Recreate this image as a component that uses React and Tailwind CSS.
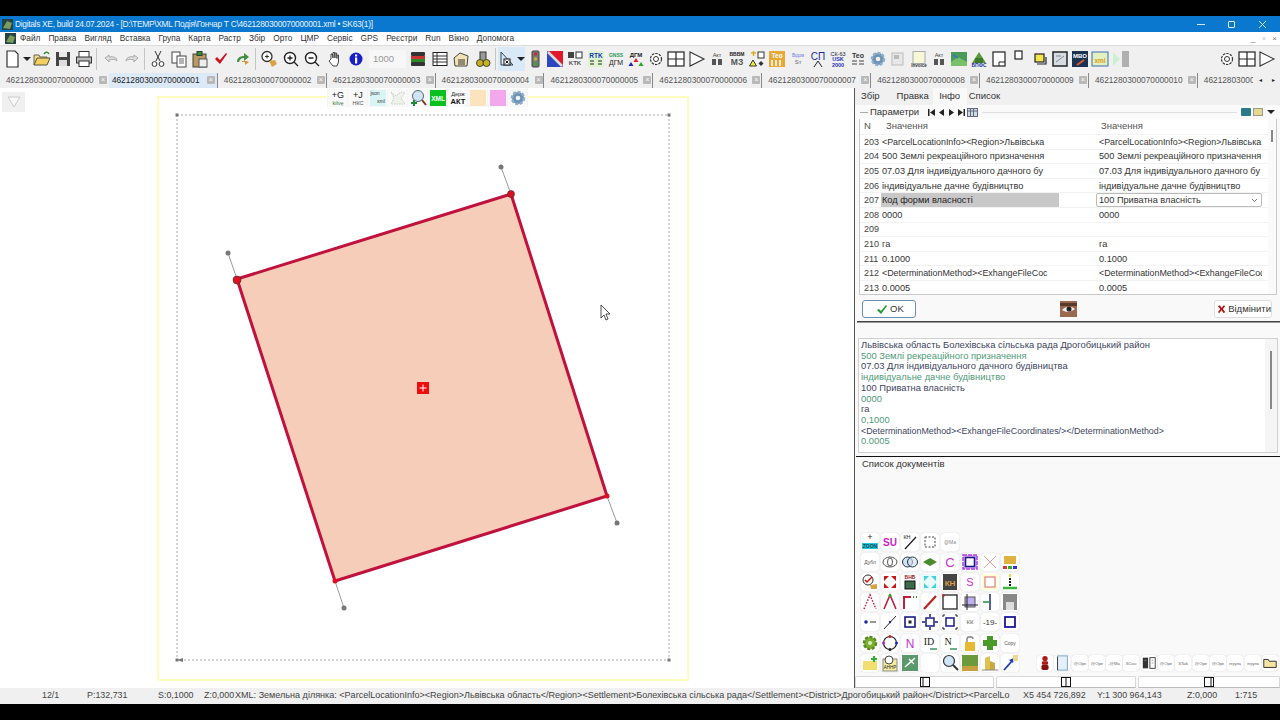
import React from "react";

/* =========================
   SMALL DRAWING HELPERS
========================= */
const Svg = ({ children, s = 18 }) => (
  <svg width={s} height={s} viewBox="0 0 18 18" className="block">
    {children}
  </svg>
);

const Tx = ({ x = 9, y = 12, z = 6, c = "#444", w = 400, children }) => (
  <text x={x} y={y} fontSize={z} fill={c} fontWeight={w} textAnchor="middle" fontFamily="Liberation Sans, sans-serif">
    {children}
  </text>
);

const icons = {
  doc: <path d="M3 1h8l3 3v13H3z" fill="#fff" stroke="#333" strokeWidth="1.2" />,
  open: <><path d="M1 15V5h5l1 2h7v2" fill="#f5dc86" stroke="#665" /><path d="M1 15l3-7h13l-3 7z" fill="#f3cf62" stroke="#554" /><path d="M11 4c2-3 4-2 5 0" fill="none" stroke="#2a8a2a" strokeWidth="1.4" /></>,
  save: <><rect x="2" y="2" width="14" height="14" fill="#444" /><rect x="5" y="2" width="8" height="5" fill="#e8e8e8" /><rect x="5" y="10" width="8" height="6" fill="#ddd" /></>,
  print: <><rect x="4" y="1.5" width="10" height="6" fill="#fff" stroke="#333" /><rect x="1.5" y="7" width="15" height="6" fill="#bbb" stroke="#333" /><rect x="4" y="11" width="10" height="5.5" fill="#fff" stroke="#333" /></>,
  undo: <path d="M3 8l4-3v2c5-1 8 1 8 4-2-2-4-2-8-1v2z" fill="#ddd" stroke="#aaa" />,
  redo: <path d="M15 8l-4-3v2C6 6 3 8 3 11c2-2 4-2 8-1v2z" fill="#ddd" stroke="#aaa" />,
  cut: <><path d="M6 1l5 10M12 1L7 11" stroke="#333" fill="none" /><circle cx="5.5" cy="14" r="2.4" fill="#fff" stroke="#333" /><circle cx="12.5" cy="14" r="2.4" fill="#fff" stroke="#333" /></>,
  copy: <><rect x="2" y="2" width="8" height="11" fill="#fff" stroke="#444" /><rect x="7" y="6" width="9" height="11" fill="#fff" stroke="#444" /><path d="M9 9h5M9 11h5M9 13h5" stroke="#666" /></>,
  paste: <><rect x="2" y="4" width="13" height="13" fill="#b89a62" stroke="#443" /><rect x="6" y="1.5" width="5" height="4" fill="#3a8a3a" stroke="#243" /><rect x="8" y="9" width="8" height="8" fill="#eee" stroke="#555" /></>,
  check: <path d="M3 9l2-2 3 3 6-7 1 1-7 10z" fill="#d0101a" />,
  greenArrow: <><path d="M3 12c0-4 3-6 7-6V3l5 4-5 4V8c-3 0-4 1-5 4z" fill="#3f8f3f" /><path d="M15 12l-4 3v-3H8v-1h4z" fill="#d9912a" /></>,
  zoomHand: <><circle cx="7" cy="6.5" r="5" fill="#fff" stroke="#333" strokeWidth="1.3" /><path d="M5 6.5h4M7 4.5v4" stroke="#333" /><path d="M9 11l6-1 2 4-5 3z" fill="#d9a24a" /></>,
  zoomIn: <><circle cx="8" cy="8" r="5.5" fill="#fff" stroke="#222" strokeWidth="1.4" /><path d="M5.5 8h5M8 5.5v5M12 12l4 4" stroke="#222" strokeWidth="1.3" /></>,
  zoomOut: <><circle cx="8" cy="8" r="5.5" fill="#fff" stroke="#222" strokeWidth="1.4" /><path d="M5.5 8h5M12 12l4 4" stroke="#222" strokeWidth="1.3" /></>,
  hand: <path d="M5 9V4l1.500 0 .5 4V2.500h1.500L9 8V3h1.500l.5 5.500V5h1.500v7l-1.500 4H7L3 11l1-1z" fill="#fff" stroke="#333" strokeWidth=".9" />,
  info: <><circle cx="9" cy="9" r="6.500" fill="#1520c8" /><rect x="8" y="4.500" width="2.200" height="2" fill="#fff" /><rect x="8" y="7.500" width="2.200" height="6" fill="#fff" /></>,
  stack: <><rect x="2" y="2" width="14" height="4" rx="1" fill="#333" /><rect x="2" y="6" width="14" height="3" fill="#c33" /><rect x="2" y="9" width="14" height="3" fill="#2a8a2a" /><rect x="2" y="12" width="14" height="4" rx="1" fill="#333" /></>,
  table: <><rect x="2" y="2.500" width="14" height="13" fill="#fff" stroke="#222" /><path d="M2 6h14M2 9h14M2 12h14M6 3v12" stroke="#333" /></>,
  folderDoc: <><path d="M2 8l6-5 8 3-1 10H3z" fill="#f1e3b4" stroke="#444" /><path d="M6 10h7M6 12h7M6 14h7" stroke="#333" /></>,
  gears: <><rect x="6" y="2" width="6" height="9" fill="#999" stroke="#333" /><circle cx="6" cy="13" r="3.500" fill="#c8b020" stroke="#443" /><circle cx="12.500" cy="13" r="3.500" fill="#c8b020" stroke="#443" /></>,
  select: <><path d="M3 2v13h12L3 2z" fill="#d8e6f5" stroke="#345" /><rect x="6" y="9" width="6" height="6" fill="#fff" stroke="#111" /><path d="M7.500 10.500l3 3M10.500 10.500l-3 3" stroke="#111" /></>,
  traffic: <><rect x="6" y="1" width="7" height="16" rx="1" fill="#777" stroke="#444" /><circle cx="9.500" cy="4" r="1.800" fill="#b33" /><circle cx="9.500" cy="9" r="1.800" fill="#ca3" /><circle cx="9.500" cy="14" r="1.800" fill="#3a3" /></>,
  blueRed: <><path d="M1 1h16v16z" fill="#e0182c" /><path d="M1 1v16h16z" fill="#2c46c0" /><path d="M2 2l14 14" stroke="#ddd" strokeWidth="2.500" /></>,
  ktk: <><rect x="2" y="2" width="6" height="6" fill="#444" /><rect x="10" y="2" width="6" height="6" fill="#fff" stroke="#333" /><Tx y="15" z="6" c="#555" w={700}>KTK</Tx></>,
  rtk: <><rect x="1" y="1" width="16" height="16" fill="#dff5d0" /><Tx y="8" z="6.500" c="#1038b8" w={700}>RTK</Tx><path d="M3 11h4M11 11h4M3 14h4M11 14h4" stroke="#222" /></>,
  gnss: <><Tx y="7" z="5" c="#2a9a50" w={700}>GNSS</Tx><Tx y="15" z="7" c="#222">ДГМ</Tx></>,
  dgm: <><Tx y="7" z="6" c="#222" w={700}>ДГМ</Tx><path d="M9 8l2.500 4h-5z" fill="#d22" /><path d="M4 12l2.500 4h-5z" fill="#22a" /><path d="M14 12l2.500 4h-5z" fill="#2a2" /></>,
  gear: <><circle cx="9" cy="9" r="5.500" fill="#fff" stroke="#333" strokeWidth="1.200" strokeDasharray="2.500 1" /><circle cx="9" cy="9" r="2.500" fill="#fff" stroke="#333" /></>,
  split: <><rect x="1" y="2" width="16" height="14" fill="#fff" stroke="#222" strokeWidth="1.200" /><path d="M9 2v14M1 9h16" stroke="#222" strokeWidth="1.200" /></>,
  play: <path d="M2 2l14 7-14 7z" fill="#fff" stroke="#333" strokeWidth="1.100" />,
  act: <><Tx y="6.500" z="5.500" c="#444">Акт</Tx><rect x="4" y="9" width="4" height="6" fill="#555" /><rect x="10" y="9" width="4" height="6" fill="#555" /></>,
  mz: <><Tx y="6" z="5" c="#222" w={700}>ВВВМ</Tx><Tx y="15" z="8.500" c="#555" w={700}>МЗ</Tx></>,
  tri: <><path d="M3 3h5M5.500 1v5" stroke="#d8b020" strokeWidth="1.500" /><rect x="10" y="2" width="6" height="6" fill="#fff" stroke="#333" /><path d="M5 10l3.500 6h-7z" fill="#ee3" stroke="#333" /><path d="M13 11l2.500 2.500-2.500 2.500-2.500-2.500z" fill="#333" /></>,
  teoOrange: <><rect x="1" y="1" width="16" height="16" fill="#e8a838" /><Tx y="8" z="6.500" c="#fff" w={700}>Тео</Tx><path d="M4 10v6M8 10v6M12 10v6" stroke="#fff" strokeWidth="1.500" /></>,
  vidom: <><Tx y="7" z="4.500" c="#6a7ae0">Відом</Tx><Tx y="14" z="6" c="#667">Sт</Tx></>,
  sp: <><Tx y="10" z="10" c="#1a2a9a">СП</Tx><path d="M5 17l4-6 4 6" fill="none" stroke="#223" /></>,
  sk63: <><Tx y="6" z="5.500" c="#223">СК-63</Tx><Tx y="11" z="5.500" c="#2a34b8" w={700}>USK</Tx><Tx y="17" z="5.500" c="#2a34b8" w={700}>2000</Tx></>,
  teo: <><Tx y="8" z="7" c="#333" w={700}>Тео</Tx><path d="M3 11h5M10 11h5M3 14h5M10 14h5" stroke="#444" /></>,
  blueGear: <><circle cx="9" cy="9" r="6" fill="#6d93b5" stroke="#8eb0cc" strokeWidth="2.500" strokeDasharray="3 1.500" /><circle cx="9" cy="9" r="2.300" fill="#f0f0f0" /></>,
  pale: <><rect x="3" y="3" width="11" height="12" fill="#e8e8e8" stroke="#bbb" /><rect x="5" y="5" width="5" height="4" fill="#bbb" /></>,
  invoice: <><rect x="3" y="1.500" width="12" height="12" fill="#f8f8d8" stroke="#aaa" /><Tx y="17" z="4.500" c="#333" w={700}>Invoice</Tx></>,
  map: <><rect x="1" y="2" width="16" height="14" fill="#4a9a5a" /><path d="M1 12l7-5 9 5v4H1z" fill="#7abf6a" /><path d="M3 5l5 3" stroke="#3878b8" strokeWidth="1.500" /></>,
  map2: <><path d="M2 13L9 2l7 11z" fill="#5a9a3a" /><path d="M5 8h8v5H5z" fill="#3a7a2a" /><Tx y="17" z="5" c="#2230a0" w={700}>БПФС</Tx></>,
  sheetBR: <><rect x="3" y="2" width="12" height="14" fill="#fff" stroke="#222" strokeWidth="1.200" /><path d="M9 16v-4h6" fill="none" stroke="#222" /></>,
  sheetTL: <rect x="4" y="1" width="7" height="8" fill="#fff" stroke="#222" strokeWidth="1.200" />,
  yellow: <><rect x="4" y="4" width="9" height="8" fill="#f2e64a" stroke="#222" strokeWidth="1.200" /><path d="M6 14h9V7" fill="none" stroke="#222" strokeWidth="1.200" /></>,
  photo: <><rect x="2" y="2" width="14" height="14" fill="#d5dde3" stroke="#222" strokeWidth="1.500" /><path d="M5 12l8-6M5 6h5" stroke="#889" /></>,
  mbo: <><rect x="1" y="1" width="16" height="16" fill="#1b3350" /><Tx y="8" z="6" c="#fff" w={700}>MBO</Tx><path d="M6 15l7-5" stroke="#e05a2a" strokeWidth="2" /></>,
  xmlMap: <><rect x="1" y="2" width="16" height="14" fill="#e3f0c0" stroke="#3a6ab0" /><Tx y="13" z="6.500" c="#d8a020" w={700}>xml</Tx></>,
  greenBar: <><path d="M1 2l7 7-7 7z" fill="#cdeed0" /><rect x="10" y="1" width="7" height="16" fill="#b0b0b0" /></>,
  gAdd: <><Tx y="9" z="9" c="#222">+G</Tx><Tx y="16" z="5.500" c="#2a7a3a">kilvę</Tx></>,
  jAdd: <><Tx y="9" z="9" c="#222">+J</Tx><Tx y="16" z="5.500" c="#555">НКС</Tx></>,
  json: <><rect x="1" y="1" width="16" height="16" fill="#d8f4f4" /><Tx x="6" y="6" z="5" c="#333">json</Tx><Tx x="12" y="14" z="5" c="#333">xml</Tx></>,
  paleMap: <><path d="M2 3l5 4 5-4 4 1-4 5 4 6H2l3-6z" fill="#eef2ea" stroke="#c2d0c0" strokeDasharray="1.500 1" /></>,
  zoomGreen: <><circle cx="9" cy="7" r="5.500" fill="#cfe4f4" stroke="#567" /><path d="M2 14h6M5 11v6" stroke="#1a8a3a" strokeWidth="2" /><path d="M13 11l4 5" stroke="#7a3a1a" strokeWidth="2" /></>,
  xmlGreen: <><rect x="1" y="1" width="16" height="16" fill="#08c020" /><Tx y="12" z="6.500" c="#fff" w={700}>XML</Tx></>,
  derzh: <><Tx y="7" z="5.500" c="#222">Держ</Tx><Tx y="15" z="7.500" c="#111" w={700}>АКТ</Tx></>,
  peach: <rect x="1" y="1" width="16" height="16" fill="#fde2be" />,
  pink: <rect x="1" y="1" width="16" height="16" fill="#f3a8ee" />,
  zoon: <><Tx y="7" z="9" c="#222">+</Tx><rect x="1" y="10" width="16" height="6" fill="#22c8d8" /><Tx y="15" z="5" c="#145" w={700}>ZOON</Tx></>,
  su: <Tx y="13" z="10" c="#d020c8" w={700}>SU</Tx>,
  kn: <><Tx x="6" y="6" z="5.500" c="#222">КН</Tx><path d="M4 16l11-12" stroke="#222" strokeWidth="1.300" /></>,
  dashSq: <rect x="4" y="4" width="10" height="10" fill="none" stroke="#444" strokeDasharray="2 1.500" />,
  atMa: <Tx y="11" z="5" c="#888">@Ma</Tx>,
  dub: <Tx y="11" z="5" c="#555">Дубл</Tx>,
  ring1: <><ellipse cx="9" cy="9" rx="7" ry="5" fill="#fff" stroke="#555" /><ellipse cx="9" cy="9" rx="2.500" ry="4" fill="#fff" stroke="#555" /></>,
  ring2: <><ellipse cx="6.500" cy="9" rx="5" ry="5" fill="#cfe0f0" stroke="#234" /><ellipse cx="11.500" cy="9" rx="5" ry="5" fill="#cfe0f0" stroke="#234" fillOpacity=".6" /></>,
  greenLeaf: <path d="M2 9l7-4 7 4-7 4z" fill="#4a8a2a" />,
  cPink: <Tx y="14" z="13" c="#c830d0">C</Tx>,
  sqPurple: <><rect x="2" y="2" width="14" height="14" fill="#e0b0f8" stroke="#b040e8" strokeDasharray="4 1" strokeWidth="1.500" /><rect x="4.500" y="4.500" width="9" height="9" fill="#fff" stroke="#1a1a8a" strokeWidth="1.600" /></>,
  crossPink: <path d="M3 3l12 12M15 3L3 15" stroke="#e8a0a0" />,
  folderColor: <><rect x="3" y="3" width="12" height="8" fill="#e0b040" /><rect x="2" y="13" width="4" height="3" fill="#d33" /><rect x="7" y="13" width="4" height="3" fill="#3a3" /><rect x="12" y="13" width="4" height="3" fill="#33c" /></>,
  checkStamp: <><circle cx="7" cy="7" r="5" fill="#fff" stroke="#333" /><path d="M4 7l2 2 5-5" stroke="#d01010" fill="none" strokeWidth="1.500" /><path d="M9 12l7-1v5H10z" fill="#d9a24a" /></>,
  arrowsRed: <><path d="M3 3h5L3 8zM15 3v5l-5-5zM3 15v-5l5 5zM15 15h-5l5-5z" fill="#c81818" /></>,
  bhs: <><Tx y="6" z="5" c="#a02020" w={700}>ВНБ</Tx><rect x="4" y="8" width="10" height="8" fill="#3a6a4a" stroke="#111" /></>,
  arrowsCyan: <><rect x="1" y="1" width="16" height="16" fill="#e8fcfc" /><path d="M3 3h5L3 8zM15 3v5l-5-5zM3 15v-5l5 5zM15 15h-5l5-5z" fill="#40d0e0" /></>,
  kh: <><rect x="2" y="1" width="14" height="16" fill="#444" /><Tx y="13" z="8" c="#d8a040" w={700}>КН</Tx></>,
  sPink: <Tx y="13" z="11" c="#c830d0">S</Tx>,
  sqRed: <><rect x="1" y="1" width="16" height="16" fill="#ffffd8" /><rect x="4" y="4" width="10" height="10" fill="#fff" stroke="#d88" strokeWidth="1.300" /></>,
  poleGreen: <><path d="M9 2v12" stroke="#222" strokeWidth="2" strokeDasharray="2 1" /><path d="M2 15h14" stroke="#3ab83a" strokeWidth="2.500" /><rect x="8" y="1" width="2" height="3" fill="#dd3" /></>,
  aRed: <path d="M3 16L9 2l6 14" fill="none" stroke="#c02040" strokeDasharray="1.500 1.500" strokeWidth="1.500" />,
  aRed2: <><path d="M3 16L9 2l6 14" fill="none" stroke="#c02040" strokeWidth="1.600" /><circle cx="9" cy="2.500" r="1.500" fill="#2a2" /></>,
  cornerRed: <><path d="M3 16V4h7" fill="none" stroke="#c02040" strokeWidth="2" /><path d="M12 4h1M15 4h1" stroke="#2a8a2a" strokeWidth="2" /></>,
  slash: <path d="M3 16L15 3" stroke="#c02020" strokeWidth="2.200" />,
  sqBlack: <><rect x="2" y="2" width="14" height="14" fill="#fff" stroke="#222" strokeWidth="1.300" /><circle cx="2.500" cy="2.500" r="1.300" fill="#c22" /></>,
  sqCross: <><rect x="4" y="4" width="10" height="10" fill="#c0b0f0" stroke="#555" /><path d="M1 12h16M6 1v16" stroke="#222" /></>,
  tCross: <><path d="M9 1v16" stroke="#1a2a8a" strokeWidth="1.500" /><path d="M2 9h7" stroke="#2a8a3a" strokeWidth="1.500" /></>,
  grayBox: <><rect x="2" y="1" width="14" height="16" fill="#888" /><rect x="5" y="9" width="8" height="8" fill="#ddd" /></>,
  dotLine: <><circle cx="5" cy="9" r="1.800" fill="#1a2a9a" /><path d="M9 9h6" stroke="#333" /></>,
  diag: <><path d="M3 16L15 3" stroke="#222" /><circle cx="9" cy="9" r="1.200" fill="#22a" /></>,
  sqDot: <><rect x="4" y="4" width="10" height="10" fill="#fff" stroke="#1a1a8a" strokeWidth="1.600" /><rect x="7.500" y="7.500" width="3" height="3" fill="#222" /></>,
  sqPlus: <><rect x="5" y="5" width="8" height="8" fill="#fff" stroke="#1a1a8a" strokeWidth="1.500" /><path d="M9 1v3M9 14v3M1 9h3M14 9h3" stroke="#1a1a8a" strokeWidth="1.500" /></>,
  sqCorners: <><rect x="5" y="5" width="8" height="8" fill="#fff" stroke="#1a1a8a" strokeWidth="1.500" /><path d="M2 4V2h2M14 2h2v2M2 14v2h2M14 16h2v-2" stroke="#222" fill="none" /></>,
  kk: <Tx y="11" z="6" c="#555">КК</Tx>,
  n19: <Tx y="12" z="8" c="#333">-19-</Tx>,
  sqBlue: <rect x="4" y="4" width="10" height="10" fill="#fff" stroke="#1a1a9a" strokeWidth="1.800" />,
  gearGreen: <><circle cx="9" cy="9" r="6" fill="#7ab030" stroke="#5a8a20" strokeWidth="2.500" strokeDasharray="3 1.500" /><circle cx="9" cy="9" r="2" fill="#dfeec0" /></>,
  circleDots: <><circle cx="9" cy="9" r="6.500" fill="#fff" stroke="#222" strokeWidth="1.200" /><circle cx="9" cy="2.500" r="1.500" fill="#c22" /><circle cx="2.500" cy="9" r="1.500" fill="#a2c" /><circle cx="15.500" cy="9" r="1.500" fill="#22c" /><circle cx="9" cy="15.500" r="1.500" fill="#222" /></>,
  nPink: <Tx y="14" z="12" c="#c830d0">N</Tx>,
  id: <><text x="8" y="11" fontSize="10" fill="#222" textAnchor="middle" fontFamily="Liberation Serif, serif">ID</text><path d="M9 15h7" stroke="#3a9a5a" strokeWidth="1.500" /></>,
  nSerif: <><text x="7" y="11" fontSize="10" fill="#222" textAnchor="middle" fontFamily="Liberation Serif, serif">N</text><path d="M9 15h7" stroke="#3a9a5a" strokeWidth="1.500" /></>,
  lock: <><path d="M6 8V5c0-3 6-3 6 0" fill="none" stroke="#888" strokeWidth="1.500" /><rect x="4" y="8" width="10" height="9" fill="#e8b830" /></>,
  plusGreen: <path d="M6 2h6v4h4v6h-4v4H6v-4H2V6h4z" fill="#4a9a2a" />,
  copyText: <Tx y="11" z="5" c="#555">Copy</Tx>,
  folderPlus: <><path d="M2 7h14v9H2z" fill="#f2de70" /><path d="M13 2v6M10 5h6" stroke="#2ab82a" strokeWidth="2" /></>,
  zoomDoc: <><rect x="2" y="5" width="14" height="12" fill="#f5eda0" stroke="#888" /><circle cx="8" cy="6" r="4" fill="#fff" stroke="#444" /><Tx y="15" z="4.500" c="#222">АННР</Tx></>,
  mapPlane: <><rect x="1" y="1" width="16" height="16" fill="#5a9a6a" /><path d="M4 13L14 4M8 5l5 5" stroke="#fff" strokeWidth="1.500" /></>,
  blank: null,
  zoomBlue: <><circle cx="8" cy="7" r="5.500" fill="#cfe6f6" stroke="#333" strokeWidth="1.200" /><path d="M12 11l5 5" stroke="#333" strokeWidth="2" /></>,
  photoGreen: <><rect x="1" y="1" width="16" height="16" fill="#6a9a3a" /><rect x="1" y="12" width="16" height="5" fill="#c8a040" /></>,
  barsYellow: <><path d="M4 16V4l5-2v14z" fill="#e0c050" /><path d="M9 16V7l5 2v7z" fill="#c8a840" /><path d="M1 16h16" stroke="#888" /></>,
  arrowBlue: <><path d="M3 16l8-9" stroke="#1a3ac0" strokeWidth="1.800" /><path d="M13 4l-1 5-4-3z" fill="#1a3ac0" /><rect x="12" y="1" width="5" height="6" fill="#e8d890" /></>,
  man: <><circle cx="9" cy="4" r="3" fill="#b01818" /><rect x="5.500" y="7" width="7" height="4" rx="1.500" fill="#b01818" /><rect x="5" y="11" width="8" height="6" rx="2" fill="#8a1010" /></>,
  page: <><rect x="4" y="1" width="11" height="16" fill="#e6f0fa" stroke="#6a9ac8" /><path d="M4 2v15" stroke="#334" /></>,
  ope: <Tx y="11" z="4.800" c="#666">@Ope</Tx>,
  ma2: <Tx y="11" z="4.800" c="#666">-@Ma</Tx>,
  sco: <Tx y="11" z="4.800" c="#666">SCou</Tx>,
  book: <><rect x="2" y="3" width="6" height="12" fill="#333" /><rect x="10" y="3" width="6" height="12" fill="#fff" stroke="#333" /><path d="M4 6h2M12 6h2M12 9h2" stroke="#999" /></>,
  stab: <Tx y="11" z="4.800" c="#666">STab</Tx>,
  grp: <Tx y="11" z="4.500" c="#666">ягрупа</Tx>,
  folder: <path d="M2 14V5h5l1 2h8v7z" fill="#f4e6a0" stroke="#222" />,
};

const I = ({ n, s }) => <Svg s={s}>{icons[n]}</Svg>;

/* =========================
   TOP TOOLBAR
========================= */
const TB = ({ n }) => (
  <div className="w-[21px] h-[22px] shrink-0 flex items-center justify-center">
    <I n={n} />
  </div>
);

const TB2 = ({ n }) => (
  <div className="w-[20.2px] h-[22px] shrink-0 flex items-center justify-center">
    <I n={n} />
  </div>
);

const Sep = () => (
  <div className="w-[5px] h-[22px] shrink-0 flex justify-center">
    <div className="w-px h-full bg-[#c4c4c4]" />
  </div>
);

const Caret = () => (
  <div className="w-[0] h-[0] border-l-[4px] border-r-[4px] border-t-[4px] border-l-transparent border-r-transparent border-t-[#222]" />
);

const toolbarTail = [
  "traffic", "blueRed", "ktk", "rtk", "gnss", "dgm", "gear", "split", "play", "act", "mz", "tri", "teoOrange", "vidom", "sp", "sk63",
  "teo", "blueGear", "pale", "invoice", "act", "map", "map2", "sheetBR", "sheetTL", "yellow", "photo", "mbo", "xmlMap", "greenBar",
];

const Toolbar = () => (
  <div className="h-[27px] bg-[#f0f0f0] border-t border-[#dcdcdc] flex items-center pl-[2px] pr-[2px]">
    <TB n="doc" />
    <div className="w-[8px] flex justify-center"><Caret /></div>
    <TB n="open" />
    <TB n="save" />
    <TB n="print" />
    <Sep />
    <div className="w-px" />
    <TB n="undo" />
    <TB n="redo" />
    <Sep />
    <TB n="cut" />
    <TB n="copy" />
    <TB n="paste" />
    <TB n="check" />
    <div className="w-px" />
    <TB n="greenArrow" />
    <Sep />
    <TB n="zoomHand" />
    <div className="w-px" />
    <TB n="zoomIn" />
    <TB n="zoomOut" />
    <div className="w-[2px]" />
    <TB n="hand" />
    <TB n="info" />
    <div className="w-[37px] ml-[3px] h-[18px] bg-[#f7f7f7] text-[9.5px] text-[#999] flex items-center pl-[4px] shrink-0">1000</div>
    <div className="w-px" />
    <TB n="stack" />
    <div className="w-px" />
    <TB n="table" />
    <TB n="folderDoc" />
    <div className="w-px" />
    <TB n="gears" />
    <Sep />
    <div className="w-[27px] h-[24px] -mr-px bg-[#d9e9f7] shrink-0 flex items-center gap-[1px]">
      <I n="select" />
      <Caret />
    </div>
    <div className="w-px" />
    {toolbarTail.map((n, i) => (
      <TB2 key={i} n={n} />
    ))}
    <div className="ml-auto flex gap-0 pr-[1px]">
      <div className="w-[20px] flex justify-center"><I n="gear" /></div>
      <div className="w-[20px] flex justify-center"><I n="split" /></div>
      <div className="w-[20px] flex justify-center"><I n="play" /></div>
    </div>
  </div>
);

/* =========================
   DRAWING
========================= */
const handles = [
  [511, 194, 501, 167],
  [237, 279, 228, 253],
  [607, 496, 617, 523],
  [335, 581, 344, 608],
];

const Drawing = () => (
  <svg width="854" height="600" viewBox="0 88 854 600" className="block">
    <rect x="158" y="97" width="530" height="583" fill="#fff" stroke="#fdfdc0" strokeWidth="2" />
    <rect x="177" y="115" width="492" height="545" fill="none" stroke="#aaa" strokeDasharray="2 2" />
    {[[177, 115], [669, 115], [669, 660], [177, 660]].map(([x, y], i) => (
      <rect key={i} x={x - 1.5} y={y - 1.5} width="3" height="3" fill="#777" />
    ))}
    <path d="M177 660l6-2v4z" fill="#777" />
    {handles.map(([a, b, c, d], i) => (
      <g key={i}>
        <line x1={a} y1={b} x2={c} y2={d} stroke="#999" />
        <circle cx={c} cy={d} r="2.500" fill="#777" />
      </g>
    ))}
    <polygon points="237,279 511,194 607,496 335,581" fill="#f5cdb9" stroke="#c0123c" strokeWidth="3" strokeLinejoin="round" />
    <circle cx="237" cy="280" r="4" fill="#e01020" stroke="#333" strokeWidth=".6" />
    <circle cx="511" cy="194" r="3.500" fill="#e01020" stroke="#333" strokeWidth=".6" />
    <circle cx="607" cy="496" r="2.500" fill="#e01020" />
    <circle cx="335" cy="581" r="2.500" fill="#e01020" />
    <rect x="417" y="382" width="12" height="12" fill="#ee0c0c" />
    <path d="M423 384.500v7M419.500 388h7" stroke="#fff" />
    <path d="M601 305v13l3-3 2 5 2-1-2-5h4z" fill="#fff" stroke="#222" strokeWidth=".8" />
  </svg>
);

/* =========================
   RIGHT PANEL DATA
========================= */
const rows = [
  ["203", "<ParcelLocationInfo><Region>Львівська", "<ParcelLocationInfo><Region>Львівська"],
  ["204", "500 Землі рекреаційного призначення", "500 Землі рекреаційного призначення"],
  ["205", "07.03 Для індивідуального дачного бу", "07.03 Для індивідуального дачного бу"],
  ["206", "індивідуальне дачне будівництво", "індивідуальне дачне будівництво"],
  ["207", "Код форми власності", "100 Приватна власність"],
  ["208", "0000", "0000"],
  ["209", "", ""],
  ["210", "га", "га"],
  ["211", "0.1000", "0.1000"],
  ["212", "<DeterminationMethod><ExhangeFileCoc", "<DeterminationMethod><ExhangeFileCoc"],
  ["213", "0.0005", "0.0005"],
];

const logLines = [
  ["Львівська область Болехівська сільська рада Дрогобицький район", "text-[#3d4560] text-[9.4px]"],
  ["500 Землі рекреаційного призначення", "text-[#4f9a78] text-[9.4px]"],
  ["07.03 Для індивідуального дачного будівництва", "text-[#3d4560] text-[9.4px]"],
  ["індивідуальне дачне будівництво", "text-[#4f9a78] text-[9.4px]"],
  ["100 Приватна власність", "text-[#3d4560] text-[9.4px]"],
  ["0000", "text-[#4f9a78] text-[9.4px]"],
  ["га", "text-[#3d4560] text-[9.4px]"],
  ["0,1000", "text-[#4f9a78] text-[9.4px]"],
  ["<DeterminationMethod><ExhangeFileCoordinates/></DeterminationMethod>", "text-[#3d4560] text-[8.9px]"],
  ["0.0005", "text-[#4f9a78] text-[9.4px]"],
];

const palette = [
  ["zoon", "su", "kn", "dashSq", "atMa"],
  ["dub", "ring1", "ring2", "greenLeaf", "cPink", "sqPurple", "crossPink", "folderColor"],
  ["checkStamp", "arrowsRed", "bhs", "arrowsCyan", "kh", "sPink", "sqRed", "poleGreen"],
  ["aRed", "aRed2", "cornerRed", "slash", "sqBlack", "sqCross", "tCross", "grayBox"],
  ["dotLine", "diag", "sqDot", "sqPlus", "sqCorners", "kk", "n19", "sqBlue"],
];

const paletteLow = ["gearGreen", "circleDots", "nPink", "id", "nSerif", "lock", "plusGreen", "copyText"];
const paletteLast = ["folderPlus", "zoomDoc", "mapPlane", "blank", "zoomBlue", "photoGreen", "barsYellow", "arrowBlue"];
const paletteTail = ["man", "page", "ope", "ope", "ma2", "sco", "book", "ope", "stab", "ope", "ope", "grp", "grp", "folder"];

const Tile = ({ n }) => (
  <div className="w-[18px] h-[18px] shrink-0 bg-white rounded-[3px] shadow-[0_0_1px_#bbb]">
    <I n={n} />
  </div>
);

const TileSm = ({ n }) => (
  <div className="w-[16px] h-[16px] shrink-0 bg-white rounded-[3px] shadow-[0_0_1px_#bbb]">
    <I n={n} s={16} />
  </div>
);

const floatTools = ["gAdd", "jAdd", "json", "paleMap", "zoomGreen", "xmlGreen", "derzh", "peach", "pink", "blueGear"];

const tabNames = [
  "4621280300070000000", "4621280300070000001", "4621280300070000002", "4621280300070000003",
  "4621280300070000004", "4621280300070000005", "4621280300070000006", "4621280300070000007",
  "4621280300070000008", "4621280300070000009", "4621280300070000010",
];

const NavTri = ({ d }) => (
  <svg width="9" height="9" viewBox="0 0 9 9" className="block"><path d={d} fill="#222" /></svg>
);

const SplitBtn = ({ line, className }) => (
  <div className={`h-[12px] bg-white border border-[#d8d8d8] border-b-[#bbb] rounded-t-[2px] flex items-center justify-center ${className}`}>
    <svg width="10" height="10" viewBox="0 0 10 10" className="block">
      <rect x=".5" y=".5" width="9" height="9" fill="#fff" stroke="#111" />
      <path d={line} stroke="#111" />
    </svg>
  </div>
);

/* =========================
   APP
========================= */
const App = () => {
  return (
    <div className="w-[1280px] h-[720px] overflow-hidden bg-black flex flex-col font-['Liberation_Sans',sans-serif] text-[#333]">

      {/* top letterbox */}
      <div className="h-[16px] shrink-0 bg-black" />

      {/* title bar */}
      <div className="h-[16px] shrink-0 bg-[#0a78cf] flex items-center pl-[2px] pr-[13px] text-[8.4px] tracking-[-0.3px] text-[#e6f2fb]">
        <svg width="11" height="11" viewBox="0 0 11 11" className="block shrink-0">
          <rect width="11" height="11" fill="#244" />
          <path d="M1 9l4-7 5 2-2 6z" fill="#7c9a5c" />
        </svg>
        <span className="ml-[2px] whitespace-nowrap">{"Digitals XE, build 24.07.2024 - [D:\\TEMP\\XML Подія\\Гончар Т С\\4621280300070000001.xml • SK63(1)]"}</span>
        <div className="ml-auto flex items-center gap-[23px] text-[#cfe6f7]">
          <div className="w-[8px] h-px bg-[#cfe6f7]" />
          <div className="w-[7px] h-[7px] border border-[#e6f2fb] rounded-[1px]" />
          <svg width="9" height="9" viewBox="0 0 9 9" className="block"><path d="M1 1l7 7M8 1L1 8" stroke="#cfe6f7" /></svg>
        </div>
      </div>

      {/* menu bar */}
      <div className="h-[13px] shrink-0 bg-white flex items-center pl-[5px] pr-[3px] text-[8.3px] text-[#333]">
        <svg width="11" height="11" viewBox="0 0 11 11" className="block shrink-0 mr-[4px]">
          <rect width="11" height="11" fill="#244" />
          <path d="M1 9l4-7 5 2-2 6z" fill="#7c9a5c" />
        </svg>
        <div className="flex gap-[8px] whitespace-nowrap">
          {["Файл", "Правка", "Вигляд", "Вставка", "Група", "Карта", "Растр", "Збір", "Орто", "ЦМР", "Сервіс", "GPS", "Реєстри", "Run", "Вікно", "Допомога"].map((m) => (
            <span key={m}>{m}</span>
          ))}
        </div>
        <div className="ml-auto flex gap-[7px] text-[8px] text-[#777]">
          <span>_</span><span>▫</span><span>×</span>
        </div>
      </div>

      <Toolbar />

      {/* document tabs */}
      <div className="h-[16px] shrink-0 bg-[#f0f0f0] flex items-center text-[8.3px] text-[#555] relative overflow-hidden">
        {tabNames.map((t, i) => (
          <div
            key={t}
            className={`w-[108.9px] h-[15px] shrink-0 flex items-center border-r ${i === 1 ? "pl-[3px] bg-[#dce9f6] text-[#222] border-[#888]" : i === 0 ? "pl-[6px] border-transparent" : "pl-[6px] border-[#888]"}`}
          >
            <span className={`whitespace-nowrap ${i === 1 ? "w-[95px]" : "w-[93px]"}`}>{t}</span>
            <div className="w-[8px] h-[8px] bg-[#b8b8b8] rounded-[1px] text-[7px] leading-[8px] text-center text-white">×</div>
          </div>
        ))}
        <span className="pl-[6px] whitespace-nowrap">46212803000</span>
        <div className="absolute right-0 top-0 h-full w-[27px] bg-[#f0f0f0] flex items-center justify-center gap-[10px] text-[6px] text-[#222]">
          <span>◂</span><span>▸</span>
        </div>
      </div>

      {/* main */}
      <div className="h-[600px] shrink-0 flex bg-white">

        {/* canvas */}
        <div className="w-[854px] shrink-0 relative overflow-hidden">
          <Drawing />
          <div className="absolute left-[2px] top-[4px] w-[23px] h-[20px] bg-[#f0f0f0] flex items-center justify-center">
            <svg width="14" height="12" viewBox="0 0 14 12" className="block"><path d="M1 1h12L7 11z" fill="#f7f7f7" stroke="#ccc" /></svg>
          </div>
          <div className="absolute left-[327px] top-[1px] flex gap-[1px] bg-[#f4f4f4] px-[1px]">
            {floatTools.map((n) => (
              <div key={n} className="w-[19px] h-[18px] flex justify-center bg-[#f9f9f9]">
                <I n={n} />
              </div>
            ))}
          </div>
        </div>

        {/* right panel */}
        <div className="flex-1 min-w-0 border-l border-[#555] bg-[#f9f9f9] flex flex-col text-[9.4px] text-[#333]">

          {/* tabs */}
          <div className="h-[17px] shrink-0 bg-[#f0f0f0] flex items-center text-[9.5px]">
            <span className="ml-[6px]">Збір</span>
            <span className="ml-[17px]">Правка</span>
            <div className="ml-[4px] w-[34px] h-[17px] bg-[#f9f9f9] flex items-center justify-center">Інфо</div>
            <span className="ml-[2px]">Список</span>
          </div>

          {/* params header */}
          <div className="h-[14px] shrink-0 flex items-center pl-[5px] pr-[4px] bg-[#fafafa]">
            <div className="w-[8px] h-px bg-[#aaa]" />
            <span className="ml-[2px] text-[9.5px]">Параметри</span>
            <div className="ml-[8px] flex items-center gap-[1px]">
              <NavTri d="M1 1h1.500v7H1zM8 1v7L3 4.500z" />
              <NavTri d="M7 1v7L2 4.500z" />
              <NavTri d="M2 1v7l5-3.500z" />
              <NavTri d="M1 1v7l5-3.500zM6.500 1H8v7H6.500z" />
              <svg width="11" height="9" viewBox="0 0 11 9" className="block">
                <rect x=".5" y=".5" width="10" height="8" fill="#cdd" stroke="#668" />
                <path d="M3.500 0v9M6.500 0v9M0 3h11" stroke="#668" />
              </svg>
            </div>
            <div className="flex-1 h-px bg-[#e0e0e0] mx-[4px]" />
            <div className="flex items-center gap-[2px]">
              <div className="w-[10px] h-[8px] bg-[#2a7a8a] rounded-[1px]" />
              <div className="w-[10px] h-[8px] bg-[#e8d890] border border-[#998]" />
              <div className="w-[11px] h-[9px] flex items-center justify-center"><Caret /></div>
            </div>
          </div>

          {/* grid */}
          <div className="h-[176px] shrink-0 ml-[4px] mr-[3px] border border-[#c8c8c8] border-t-0 bg-white flex">
            <div className="flex-1 min-w-0">
              <div className="h-[15px] flex items-center text-[9.5px] text-[#555]">
                <span className="w-[21px] pl-[4px]">N</span>
                <span className="w-[215px] pl-[5px]">Значення</span>
                <span className="pl-[5px]">Значення</span>
              </div>
              {rows.map(([n, a, b]) => {
                const latin = a.startsWith("<");
                return (
                  <div key={n} className={`h-[14.6px] flex items-center border-t border-[#f2f2f2] whitespace-nowrap leading-[12px] ${latin ? "text-[8.9px]" : "text-[9.2px]"}`}>
                    <span className="w-[21px] pl-[4px] shrink-0 text-[9px] text-[#444]">{n}</span>
                    <div className={`w-[178px] shrink-0 h-full flex items-center pl-[1px] overflow-hidden ${n === "207" ? "bg-[#c8c8c8] text-[#222]" : ""}`}>
                      <span className="w-[165px] overflow-hidden">{a}</span>
                    </div>
                    <div className="w-[37px] shrink-0" />
                    {n === "207" ? (
                      <div className="w-[166px] h-[14px] border border-[#bbb] rounded-[2px] bg-white flex items-center pl-[2px] pr-[3px]">
                        <span className="flex-1">{b}</span>
                        <svg width="7" height="5" viewBox="0 0 7 5" className="block"><path d="M1 1l2.500 2.500L6 1" fill="none" stroke="#777" /></svg>
                      </div>
                    ) : (
                      <span className="w-[166px] pl-[3px] overflow-hidden">{b}</span>
                    )}
                  </div>
                );
              })}
            </div>
            <div className="w-[8px] shrink-0 bg-[#fafafa] flex justify-center pt-[11px]">
              <div className="w-[2px] h-[12px] bg-[#888]" />
            </div>
          </div>

          {/* buttons */}
          <div className="h-[26px] shrink-0 flex items-center pl-[7px] pr-[8px] pt-[2px] justify-between">
            <div className="w-[54px] h-[18px] border border-[#6a8fb0] rounded-[3px] bg-white flex items-center pl-[13px] gap-[2px] text-[9.5px]">
              <svg width="12" height="11" viewBox="0 0 12 11" className="block"><path d="M1 6l2-1 2 2 5-6 1 1-6 8z" fill="#1a9a2a" /></svg>
              <span>OK</span>
            </div>
            <svg width="17" height="16" viewBox="0 0 17 16" className="block ml-[6px]">
              <rect width="17" height="16" fill="#9a6a50" />
              <path d="M2 9c4-4 9-4 13-1-4 3-9 4-13 1z" fill="#eee" />
              <circle cx="9" cy="8" r="2.500" fill="#222" />
              <rect y="2" width="17" height="3" fill="#5a3a2a" />
            </svg>
            <div className="w-[58px] h-[18px] border border-[#ddd] rounded-[3px] bg-white flex items-center pl-[2px] gap-[2px] text-[9.5px] whitespace-nowrap">
              <svg width="10" height="10" viewBox="0 0 10 10" className="block"><path d="M1 2l2-1 2 2.500L7.500 1 9 2 6.500 5 9 8.500 7 9.500 5 6.500 2.500 9.500 1 8.500 3.500 5z" fill="#b01818" /></svg>
              <span>Відмінити</span>
            </div>
          </div>

          {/* divider */}
          <div className="h-[2px] shrink-0 bg-[#444] ml-[2px] border-b border-[#999]" />

          {/* text box */}
          <div className="h-[115px] mt-[15px] shrink-0 ml-[3px] mr-[2px] border border-[#d0d0d0] bg-white flex">
            <div className="flex-1 min-w-0 pl-[2px] pt-[1px] whitespace-nowrap leading-[10.7px]">
              {logLines.map(([t, c], i) => (
                <div key={i} className={c}>{t}</div>
              ))}
            </div>
            <div className="w-[12px] shrink-0 bg-[#f5f5f5] flex justify-center pt-[12px]">
              <div className="w-[2px] h-[58px] bg-[#888]" />
            </div>
          </div>

          {/* black separator */}
          <div className="h-px shrink-0 bg-[#111] mt-[3px] ml-[1px]" />

          {/* documents */}
          <div className="flex-1 min-h-0 flex flex-col">
            <div className="h-[13px] shrink-0 pl-[7px] flex items-center text-[9.5px] mt-[1px]">Список документів</div>
            <div className="flex-1 min-h-0 flex flex-col justify-end pl-[6px] pb-[4px] gap-[2px]">
              {palette.map((row, i) => (
                <div key={i} className="flex gap-[2px]">
                  {row.map((n, j) => <Tile key={j} n={n} />)}
                </div>
              ))}
              <div className="flex gap-[2px] mt-[1px]">
                {paletteLow.map((n, j) => <Tile key={j} n={n} />)}
              </div>
              <div className="flex items-center">
                <div className="flex gap-[2px]">
                  {paletteLast.map((n, j) => <Tile key={j} n={n} />)}
                </div>
                <div className="flex gap-[1.300px] ml-[18px]">
                  {paletteTail.map((n, j) => <TileSm key={j} n={n} />)}
                </div>
              </div>
            </div>
            <div className="h-[12px] shrink-0 flex gap-[2px]">
              <SplitBtn line="M3 0v10" className="w-[139px] shrink-0" />
              <SplitBtn line="M5 0v10" className="w-[140px] shrink-0" />
              <SplitBtn line="M7 0v10" className="flex-1" />
            </div>
          </div>

        </div>
      </div>

      {/* status bar */}
      <div className="h-[16px] shrink-0 bg-[#f0f0f0] flex items-center text-[8.9px] text-[#444] whitespace-nowrap">
        <span className="ml-[42px] w-[45px]">12/1</span>
        <span className="w-[71px]">P:132,731</span>
        <span className="w-[46px]">S:0,1000</span>
        <span className="w-[31px]">Z:0,000</span>
        <span className="w-[775px] text-[9.05px]">{"XML: Земельна ділянка: <ParcelLocationInfo><Region>Львівська область</Region><Settlement>Болехівська сільська рада</Settlement><District>Дрогобицький район</District><ParcelLo"}</span>
        <span className="ml-[13px] w-[74px]">X5 454 726,892</span>
        <span className="w-[90px]">Y:1 300 964,143</span>
        <span className="w-[48px]">Z:0,000</span>
        <span>1:715</span>
      </div>

      {/* bottom letterbox */}
      <div className="flex-1 bg-black" />
    </div>
  );
};

export default App;
